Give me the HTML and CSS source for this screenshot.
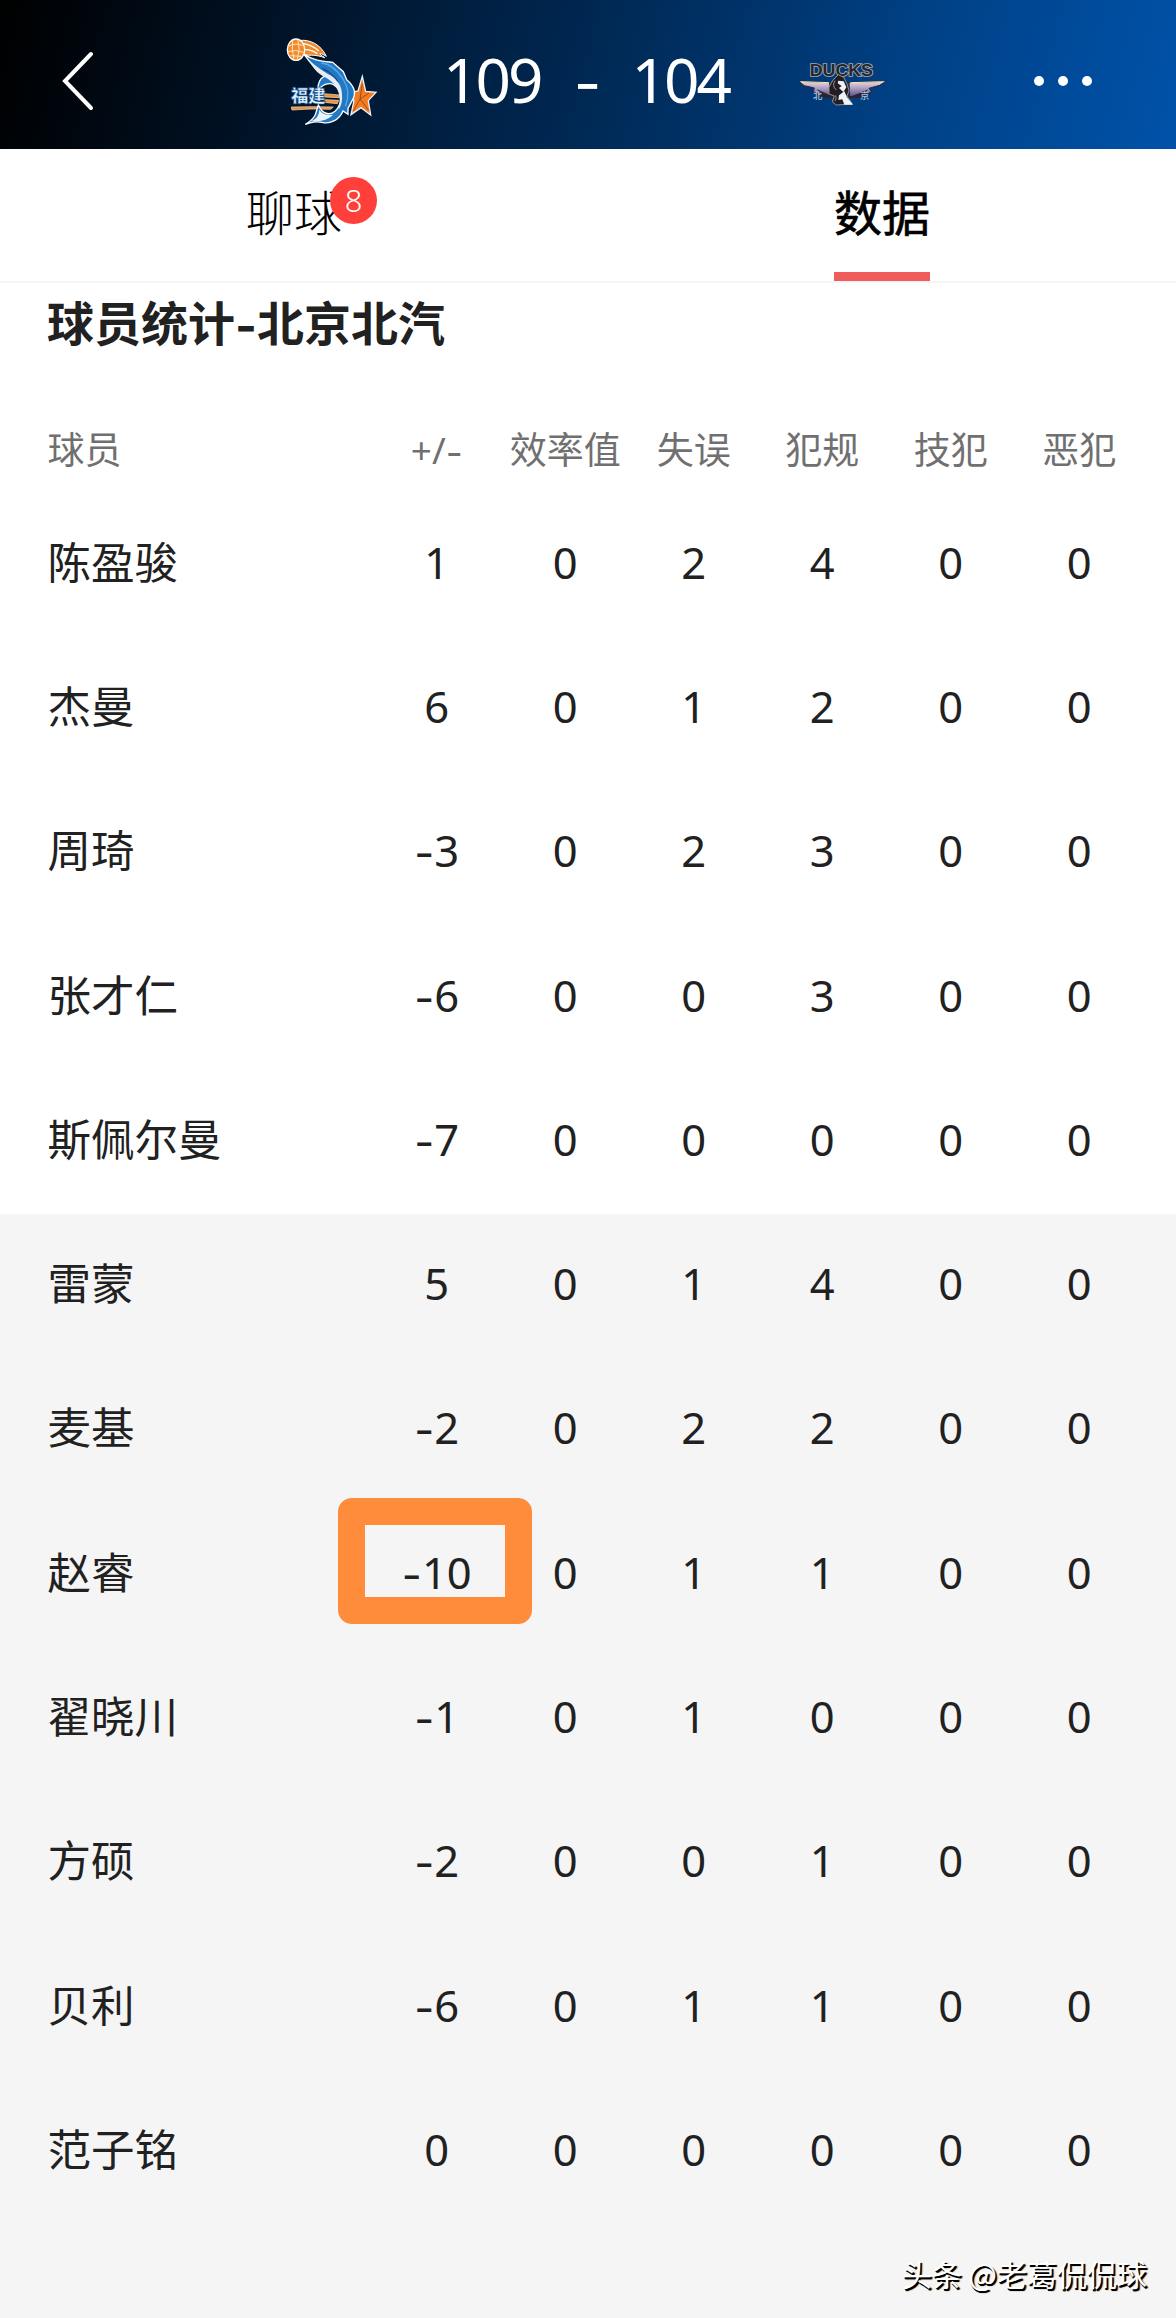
FILE: index.html
```html
<!DOCTYPE html>
<html lang="zh-CN">

<head>
  <meta charset="UTF-8">
  <meta name="viewport" content="width=device-width, initial-scale=1.0">
  <title>球员统计</title>
  <link rel="stylesheet" href="styles.css">
</head>

<body>
  <header class="header">
    <svg class="back" viewBox="0 0 36 64">
      <path d="M31 5 L5 32 L31 59" />
    </svg>

    <svg class="logo-fj" viewBox="0 0 345 315">
      <!-- ball -->
      <path d="M80 34 C105 32 140 44 157 82 C135 68 130 72 152 86 C125 76 110 80 92 78 Z" fill="#f08a2c" stroke="#fff" stroke-width="3" />
      <path d="M88 44 Q115 48 134 66 M88 62 Q110 60 130 74" fill="none" stroke="#fff" stroke-width="4" />
      <ellipse cx="66" cy="62" rx="26" ry="32" fill="#f08a2c" stroke="#fff" stroke-width="4" />
      <path d="M44 52 Q64 40 86 50 M42 68 Q64 60 88 70 M56 34 Q52 62 60 90 M72 34 Q80 62 70 90 M50 80 L82 82" fill="none" stroke="#ffe3bd" stroke-width="3" />
      <!-- stripes -->
      <path d="M52 234 Q120 232 178 234 L170 241 Q110 238 54 243 Z M150 194 L196 198 L196 206 L152 204 Z M154 212 L194 214 L190 224 L150 220 Z" fill="#f28b35" stroke="#ffe6cc" stroke-width="2" />
      <!-- star -->
      <path d="M265 142 L275 187 L306 190 L283 215 L290 258 L261 236 L231 257 L240 214 L218 193 L252 186 Z" fill="#f47b20" stroke="#e9f2fb" stroke-width="4" />
      <path d="M265 165 L258 210 L285 192 M258 210 L284 244 M258 210 L238 246" fill="none" stroke="#6b3a1c" stroke-width="2" />
      <!-- marlin -->
      <path d="M90 76 C120 96 150 97 176 100 L208 128 L218 152 C242 172 248 190 236 212 L222 238 L222 256 L207 246 C196 274 166 286 144 280 C124 276 112 280 94 286 C112 274 124 266 128 244 L133 228 C144 254 166 262 184 246 C208 222 204 184 180 168 C166 159 142 166 132 186 C130 162 138 148 154 140 C130 128 112 106 90 76 Z" fill="#2378c4" stroke="#fff" stroke-width="4" />
      <path d="M102 90 C124 112 142 122 160 134 C184 146 200 164 203 186 C206 212 204 226 194 242 C206 190 184 162 156 146 C128 134 114 112 102 90 Z" fill="#e6ecf4" />
      <path d="M136 242 Q148 262 178 257 Q154 280 112 277 Q136 266 136 242 Z" fill="#e9f4fc" />
      <path d="M142 102 C170 105 192 126 208 152 C224 176 226 202 214 232" fill="none" stroke="#55a8e4" stroke-width="4" />
      <path d="M144 118 L164 128 M150 122 Q176 132 192 158" fill="none" stroke="#123d78" stroke-width="3" />
      <text x="51" y="220" class="fj-text">福建</text>
    </svg>

    <div class="score">
      <span>109</span>
      <span class="dash">-</span>
      <span>104</span>
    </div>

    <svg class="logo-bj" viewBox="0 0 330 210">
      <defs>
        <linearGradient id="wing" x1="0" y1="0" x2="0" y2="1">
          <stop offset="0" stop-color="#f2dfc0" />
          <stop offset=".4" stop-color="#b0a0cc" />
          <stop offset="1" stop-color="#534975" />
        </linearGradient>
      </defs>
      <!-- wings -->
      <path d="M30 106 L122 110 L122 154 L100 150 L72 138 L76 126 L46 119 Z M290 106 L180 110 L182 152 L208 150 L248 138 L240 127 L272 118 Z" fill="url(#wing)" stroke="#2c2636" stroke-width="3" />
      <path d="M34 107 L120 110 M286 107 L184 110" stroke="#f4e3c4" stroke-width="3" />
      <path d="M84 130 L128 150 L190 150 L238 130 L212 156 L104 156 Z" fill="#2a2530" />
      <text x="62" y="89" class="ducks" textLength="190" lengthAdjust="spacingAndGlyphs">DUCKS</text>
      <text x="72" y="159" class="bj-text">北</text>
      <text x="213" y="159" class="bj-text">京</text>
      <!-- duck -->
      <path d="M148 86 L164 94 L174 114 L180 134 L174 150 L190 174 L142 177 L130 168 L136 150 L120 144 L120 124 L132 102 Z" fill="#211d24" stroke="#9a8f86" stroke-width="3" />
      <path d="M148 104 L164 106 L172 124 L163 138 L150 126 L158 120 L146 112 Z M150 148 L166 136 L174 154 L192 176 L166 176 L160 160 L148 162 Z" fill="#eef3f8" />
      <path d="M138 104 Q128 120 142 132 M138 166 Q144 156 140 148" fill="none" stroke="#d8c8a8" stroke-width="2" />
    </svg>

    <div class="more"><i></i><i></i><i></i></div>
  </header>

  <nav class="tabs">
    <div class="tab"><span class="label">聊球<b class="badge">8</b></span></div>
    <div class="tab active"><span class="label">数据</span></div>
  </nav>

  <h1 class="title">球员统计<span class="dash">-</span>北京北汽</h1>

  <div class="row head">
    <div>球员</div><div>+/<span class="dash">-</span></div><div>效率值</div><div>失误</div><div>犯规</div><div>技犯</div><div>恶犯</div>
  </div>

  <div class="starters">
    <div class="row"><div>陈盈骏</div><div>1</div><div>0</div><div>2</div><div>4</div><div>0</div><div>0</div></div>
    <div class="row"><div>杰曼</div><div>6</div><div>0</div><div>1</div><div>2</div><div>0</div><div>0</div></div>
    <div class="row"><div>周琦</div><div><span class="dash">-</span>3</div><div>0</div><div>2</div><div>3</div><div>0</div><div>0</div></div>
    <div class="row"><div>张才仁</div><div><span class="dash">-</span>6</div><div>0</div><div>0</div><div>3</div><div>0</div><div>0</div></div>
    <div class="row"><div>斯佩尔曼</div><div><span class="dash">-</span>7</div><div>0</div><div>0</div><div>0</div><div>0</div><div>0</div></div>
  </div>

  <div class="bench">
    <div class="row"><div>雷蒙</div><div>5</div><div>0</div><div>1</div><div>4</div><div>0</div><div>0</div></div>
    <div class="row"><div>麦基</div><div><span class="dash">-</span>2</div><div>0</div><div>2</div><div>2</div><div>0</div><div>0</div></div>
    <div class="row"><div>赵睿</div><div class="marked"><span class="dash">-</span>10</div><div>0</div><div>1</div><div>1</div><div>0</div><div>0</div></div>
    <div class="row"><div>翟晓川</div><div><span class="dash">-</span>1</div><div>0</div><div>1</div><div>0</div><div>0</div><div>0</div></div>
    <div class="row"><div>方硕</div><div><span class="dash">-</span>2</div><div>0</div><div>0</div><div>1</div><div>0</div><div>0</div></div>
    <div class="row"><div>贝利</div><div><span class="dash">-</span>6</div><div>0</div><div>1</div><div>1</div><div>0</div><div>0</div></div>
    <div class="row"><div>范子铭</div><div>0</div><div>0</div><div>0</div><div>0</div><div>0</div><div>0</div></div>
    <div class="watermark">头条 @老葛侃侃球</div>
  </div>
</body>

</html>
```
FILE: styles.css
```css
* {
  box-sizing: border-box;
}

body {
  margin: 0;
  height: 2318px;
  display: flex;
  flex-direction: column;
  overflow: hidden;
  background: #fff;
  color: #212121;
  font-family: "Noto Sans", "Noto Sans CJK SC", sans-serif;
}

.header {
  display: flex;
  align-items: center;
  flex: none;
  height: 149px;
  padding: 13px 84px 0 60px;
  background: linear-gradient(105deg, #000 0%, #001124 22%, #002a57 52%, #004288 78%, #0052aa 100%);
}

.back {
  width: 36px;
  height: 64px;
  fill: none;
  stroke: #fff;
  stroke-width: 4;
  stroke-linecap: round;
}

.logo-fj {
  width: 115px;
  height: 105px;
  margin-left: 178px;
}

.fj-text {
  font: 900 52px "Noto Sans CJK SC", sans-serif;
  fill: #e4f3ff;
  stroke: #1d5c9c;
  stroke-width: 2;
}

.score {
  display: flex;
  align-items: center;
  justify-content: space-between;
  width: 286px;
  margin-left: 54px;
  padding-bottom: 5px;
  color: #fff;
  font-size: 62px;
  line-height: 64px;
  letter-spacing: -3px;
}

.dash {
  font-family: Inter, sans-serif;
  line-height: 1;
  vertical-align: -2px;
}

.score .dash {
  padding-top: 9px;
  font-size: 60px;
}

.logo-bj {
  width: 110px;
  height: 70px;
  margin-left: 60px;
}

.ducks {
  font: 900 50px "Liberation Sans", sans-serif;
  fill: #26262c;
  stroke: #a2a8b2;
  stroke-width: 5;
  paint-order: stroke;
}

.bj-text {
  font: 500 28px "Noto Sans CJK SC", sans-serif;
  fill: #aebdd2;
}

.more {
  display: flex;
  gap: 14px;
  margin-left: auto;
}

.more i {
  width: 10px;
  height: 10px;
  border-radius: 50%;
  background: #fff;
}

.tabs {
  display: flex;
  flex: none;
  height: 134px;
  border-bottom: 2px solid #f5f5f5;
}

.tab {
  flex: 1;
  display: flex;
  justify-content: center;
}

.label {
  position: relative;
  height: 132px;
  color: #000;
  font: 300 48px/122px "Noto Sans CJK SC", sans-serif;
}

.active .label {
  font-weight: 400;
  -webkit-text-stroke: 0.7px #000;
  border-bottom: 9px solid #f05b5b;
}

.badge {
  position: absolute;
  left: 84px;
  top: 28px;
  width: 47px;
  height: 47px;
  border-radius: 50%;
  background: #ff403a;
  color: #fff;
  font: 300 31px/46px "Noto Sans", sans-serif;
  text-align: center;
}

.title {
  flex: none;
  height: 78px;
  margin: 0;
  padding-left: 47px;
  font: 700 47px/76px "Noto Sans CJK SC", sans-serif;
}

.row {
  display: grid;
  grid-template-columns: 325px repeat(6, 128.5px);
  align-items: center;
  height: 144.3px;
  padding: 0 0 6px 47.5px;
  font-size: 43.5px;
  line-height: 60px;
  text-align: center;
  white-space: nowrap;
}

.row div:first-child {
  text-align: left;
}

.head {
  flex: none;
  height: 131.5px;
  padding: 46px 0 0 47.5px;
  color: #707070;
  font-size: 37px;
}

.bench {
  flex: 1;
  background: #f5f5f5;
}

.marked {
  position: relative;
}

.marked::after {
  content: "";
  position: absolute;
  box-sizing: border-box;
  left: -34.5px;
  top: -43.5px;
  width: 194px;
  height: 126px;
  border: 27px solid #ff8c3a;
  border-radius: 14px;
}

.watermark {
  padding: 27px 29px 0 0;
  color: #fff;
  font: 400 30px/44px "Noto Sans CJK SC", sans-serif;
  text-align: right;
  text-shadow: 1px 2px 0 #000, 2px 2px 1px #000;
}
```
